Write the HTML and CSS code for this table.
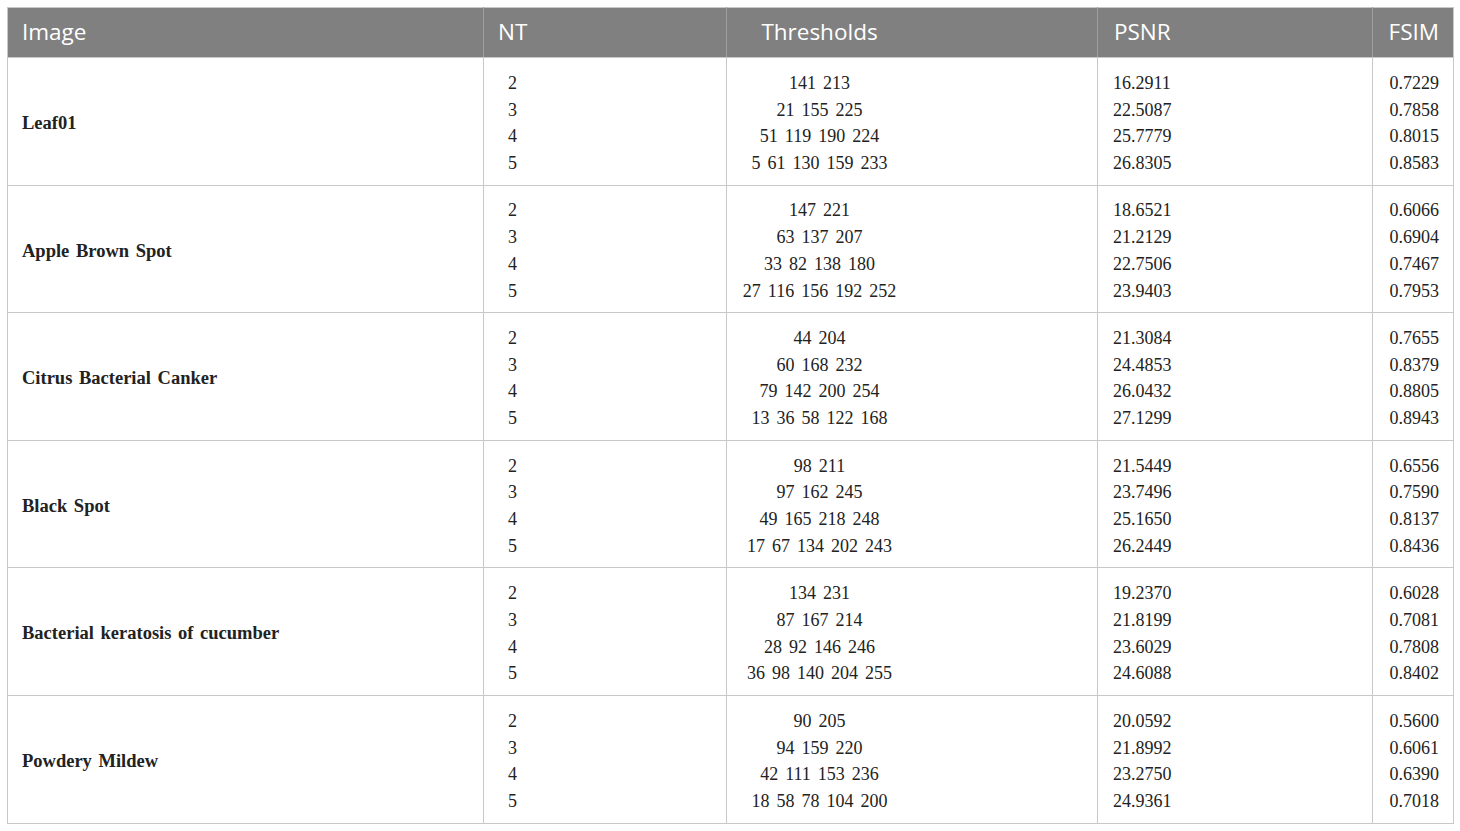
FILE: index.html
```html
<!DOCTYPE html>
<html>
<head>
<meta charset="utf-8">
<link rel="stylesheet" href="styles.css">
</head>
<body>
<div class="wrap">
<table class="results">
  <colgroup>
    <col class="c-img"><col class="c-nt"><col class="c-th"><col class="c-psnr"><col class="c-fsim">
  </colgroup>
  <thead>
    <tr><th class="h-img">Image</th><th class="h-nt">NT</th><th class="h-th">Thresholds</th><th class="h-psnr">PSNR</th><th class="h-fsim">FSIM</th></tr>
  </thead>
  <tbody>
    <tr>
      <td class="name">Leaf01</td>
      <td class="nt">2<br>3<br>4<br>5</td>
      <td class="th">141 213<br>21 155 225<br>51 119 190 224<br>5 61 130 159 233</td>
      <td class="psnr">16.2911<br>22.5087<br>25.7779<br>26.8305</td>
      <td class="fsim">0.7229<br>0.7858<br>0.8015<br>0.8583</td>
    </tr>
    <tr>
      <td class="name">Apple Brown Spot</td>
      <td class="nt">2<br>3<br>4<br>5</td>
      <td class="th">147 221<br>63 137 207<br>33 82 138 180<br>27 116 156 192 252</td>
      <td class="psnr">18.6521<br>21.2129<br>22.7506<br>23.9403</td>
      <td class="fsim">0.6066<br>0.6904<br>0.7467<br>0.7953</td>
    </tr>
    <tr>
      <td class="name">Citrus Bacterial Canker</td>
      <td class="nt">2<br>3<br>4<br>5</td>
      <td class="th">44 204<br>60 168 232<br>79 142 200 254<br>13 36 58 122 168</td>
      <td class="psnr">21.3084<br>24.4853<br>26.0432<br>27.1299</td>
      <td class="fsim">0.7655<br>0.8379<br>0.8805<br>0.8943</td>
    </tr>
    <tr>
      <td class="name">Black Spot</td>
      <td class="nt">2<br>3<br>4<br>5</td>
      <td class="th">98 211<br>97 162 245<br>49 165 218 248<br>17 67 134 202 243</td>
      <td class="psnr">21.5449<br>23.7496<br>25.1650<br>26.2449</td>
      <td class="fsim">0.6556<br>0.7590<br>0.8137<br>0.8436</td>
    </tr>
    <tr>
      <td class="name">Bacterial keratosis of cucumber</td>
      <td class="nt">2<br>3<br>4<br>5</td>
      <td class="th">134 231<br>87 167 214<br>28 92 146 246<br>36 98 140 204 255</td>
      <td class="psnr">19.2370<br>21.8199<br>23.6029<br>24.6088</td>
      <td class="fsim">0.6028<br>0.7081<br>0.7808<br>0.8402</td>
    </tr>
    <tr>
      <td class="name">Powdery Mildew</td>
      <td class="nt">2<br>3<br>4<br>5</td>
      <td class="th">90 205<br>94 159 220<br>42 111 153 236<br>18 58 78 104 200</td>
      <td class="psnr">20.0592<br>21.8992<br>23.2750<br>24.9361</td>
      <td class="fsim">0.5600<br>0.6061<br>0.6390<br>0.7018</td>
    </tr>
  </tbody>
</table>
</div>
</body>
</html>
```

FILE: styles.css
```css
html, body {
  margin: 0;
  padding: 0;
  background: #ffffff;
}
.wrap {
  padding: 7px 0 0 7px;
}
.results {
  border-collapse: collapse;
  table-layout: fixed;
  width: 1446px;
  border: 1px solid #c8c8c8;
  font-family: "Liberation Serif", "Times New Roman", serif;
  font-size: 18px;
  color: #222222;
}
.c-img { width: 476px; }
.c-nt { width: 243px; }
.c-th { width: 371px; }
.c-psnr { width: 275px; }
.c-fsim { width: 81px; }

.results th {
  background: #808080;
  color: #ffffff;
  font-family: "Open Sans", "Noto Sans", sans-serif;
  font-weight: normal;
  font-size: 22.5px;
  height: 47px;
  padding: 0 14px 2px 14px;
  text-align: left;
  vertical-align: middle;
  border-left: 1px solid #a0a0a0;
  border-bottom: 1px solid #c8c8c8;
}
.results th.h-img { border-left: none; }
.results th.h-th { text-align: center; padding-right: 199px; }
.results th.h-psnr { padding-left: 16px; }
.results th.h-fsim { text-align: right; padding-right: 14px; }

.results td {
  border: 1px solid #c8c8c8;
  height: 127.6px;
  padding: 6px 14px 2px 14px;
  line-height: 26.7px;
  vertical-align: middle;
  box-sizing: border-box;
}
.results td.name {
  font-weight: bold;
  font-size: 18.5px;
  word-spacing: 2px;
  padding-left: 14px;
}
.results td.nt { padding-left: 24px; }
.results td.th { text-align: center; padding-right: 199px; word-spacing: 2.5px; }
.results td.psnr { padding-left: 15px; }
.results td.fsim { text-align: right; padding-right: 14px; }
```
